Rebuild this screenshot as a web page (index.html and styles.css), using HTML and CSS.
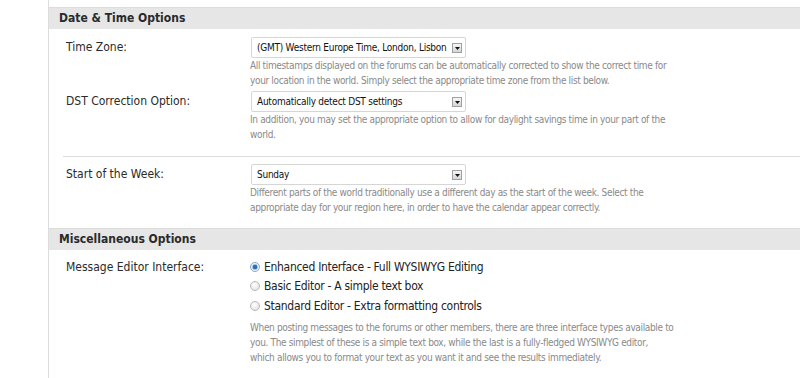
FILE: index.html
```html
<!DOCTYPE html>
<html>
<head>
<meta charset="utf-8">
<link rel="stylesheet" href="styles.css">
</head>
<body>
<div class="wrap">
  <div class="section">
    <div class="sec-head">Date &amp; Time Options</div>
    <div class="group first">
      <div class="row">
        <div class="label">Time Zone:</div>
        <div class="field">
          <div class="select"><span class="sel-text">(GMT) Western Europe Time, London, Lisbon</span><span class="sel-btn"><svg width="5" height="3" viewBox="0 0 5 3"><path d="M0 0h5L2.5 3z" fill="#111"/></svg></span></div>
          <p class="desc">All timestamps displayed on the forums can be automatically corrected to show the correct time for your location in the world. Simply select the appropriate time zone from the list below.</p>
        </div>
      </div>
      <div class="row">
        <div class="label">DST Correction Option:</div>
        <div class="field">
          <div class="select"><span class="sel-text">Automatically detect DST settings</span><span class="sel-btn"><svg width="5" height="3" viewBox="0 0 5 3"><path d="M0 0h5L2.5 3z" fill="#111"/></svg></span></div>
          <p class="desc">In addition, you may set the appropriate option to allow for daylight savings time in your part of the world.</p>
        </div>
      </div>
    </div>
    <div class="group sep">
      <div class="row">
        <div class="label">Start of the Week:</div>
        <div class="field">
          <div class="select"><span class="sel-text">Sunday</span><span class="sel-btn"><svg width="5" height="3" viewBox="0 0 5 3"><path d="M0 0h5L2.5 3z" fill="#111"/></svg></span></div>
          <p class="desc">Different parts of the world traditionally use a different day as the start of the week. Select the appropriate day for your region here, in order to have the calendar appear correctly.</p>
        </div>
      </div>
    </div>
  </div>
  <div class="section">
    <div class="sec-head">Miscellaneous Options</div>
    <div class="group misc">
      <div class="row">
        <div class="label">Message Editor Interface:</div>
        <div class="field">
          <ul class="radios">
            <li><span class="radio on"></span>Enhanced Interface - Full WYSIWYG Editing</li>
            <li><span class="radio"></span>Basic Editor - A simple text box</li>
            <li><span class="radio"></span>Standard Editor - Extra formatting controls</li>
          </ul>
          <p class="desc">When posting messages to the forums or other members, there are three interface types available to you. The simplest of these is a simple text box, while the last is a fully-fledged WYSIWYG editor, which allows you to format your text as you want it and see the results immediately.</p>
        </div>
      </div>
    </div>
  </div>
</div>
</body>
</html>
```
FILE: styles.css
```css
* { box-sizing: border-box; }
html, body { margin: 0; padding: 0; background: #fff; }
body {
  font-family: "DejaVu Sans Condensed", "DejaVu Sans", Tahoma, sans-serif;
  color: #222;
  overflow: hidden;
}
.wrap {
  margin-left: 48px;
  border-left: 1px solid #dcdcdc;
  padding-top: 7px;
  height: 378px;
}
.section { border-top: 1px solid #dcdcdc; }
.sec-head {
  background: #e6e6e6;
  height: 21px;
  line-height: 21px;
  padding-left: 10px;
  font-weight: bold;
  font-size: 12px;
  color: #2a2a2a;
}
.group { padding: 8px 0 10px 17px; }
.group.first { padding-bottom: 11px; }
.group.sep {
  margin-left: 14px;
  padding-left: 3px;
  border-top: 1px solid #dcdcdc;
  padding-top: 7px;
}
.group.misc { padding-top: 7px; }
.row { display: flex; }
.label {
  width: 184px;
  flex: none;
  font-size: 12px;
  line-height: 14px;
  padding-top: 3px;
  color: #2a2a2a;
}
.field { flex: 1; }
.select {
  width: 215px;
  height: 21px;
  margin-left: 1px;
  border: 1px solid #d6d6d6;
  border-radius: 2px;
  display: flex;
  align-items: center;
  padding-left: 5px;
  font-size: 10px;
  letter-spacing: -0.25px;
  color: #111;
  position: relative;
}
.sel-text { white-space: nowrap; }
.sel-btn {
  position: absolute;
  right: 3px;
  top: 5px;
  width: 10px;
  height: 10px;
  border: 1px solid #a0a0a0;
  background: linear-gradient(#f6f6f6, #d6d6d6);
  display: flex;
  align-items: center;
  justify-content: center;
}
.desc {
  margin: 0 0 3px;
  width: 425px;
  font-size: 10px;
  letter-spacing: -0.35px;
  line-height: 15px;
  color: #8a8a8a;
}
.radios { list-style: none; margin: 0; padding: 0; }
.radios li {
  display: flex;
  align-items: center;
  font-size: 12px;
  letter-spacing: -0.3px;
  height: 19.5px;
  color: #222;
}
.radio {
  width: 10px;
  height: 10px;
  border-radius: 50%;
  border: 1px solid #b8b8b8;
  background: radial-gradient(circle at 40% 35%, #fff, #ddd);
  margin-right: 4px;
  flex: none;
}
.radio.on {
  background: radial-gradient(circle, #2a6fb8 0 2px, #9cc2e6 2.5px, #f4f4f4 3.5px);
  border-color: #8aa6c4;
}
.radios + .desc { margin-top: 4px; }
```
